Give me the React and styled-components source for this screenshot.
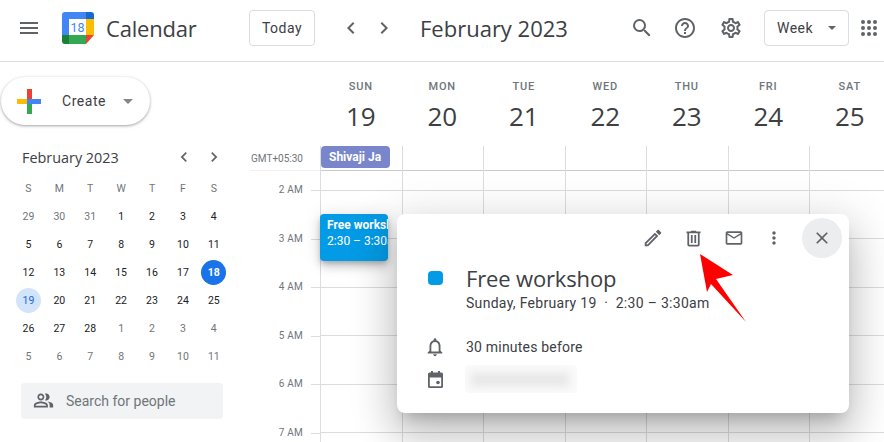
import React from 'react';
import styled, { createGlobalStyle } from 'styled-components';
import {
  MdMenu, MdSearch, MdHelpOutline, MdOutlineSettings, MdChevronLeft, MdChevronRight,
  MdOutlineEdit, MdOutlineEmail, MdMoreVert, MdClose,
  MdNotificationsNone, MdOutlinePeopleAlt,
} from 'react-icons/md';

const GlobalStyle = createGlobalStyle`
  html, body {
    margin: 0;
    padding: 0;
    background: #fff;
    overflow: hidden;
  }
  body {
    font-family: Roboto, "Liberation Sans", sans-serif;
    color: #3c4043;
  }
`;

const TITLE_FONT = `"Open Sans", Roboto, sans-serif`;
const COLUMN = 81.5;

const Page = styled.div`
  position: relative;
  width: 884px;
  height: 442px;
  overflow: hidden;
  display: flex;
  flex-direction: column;
`;

const Header = styled.header`
  flex: none;
  height: 62px;
  box-sizing: border-box;
  padding-bottom: 5px;
  border-bottom: 1px solid #dadce0;
  display: flex;
  align-items: center;
`;

const MenuButton = styled.div`
  width: 62px;
  padding-left: 17px;
  box-sizing: border-box;
  display: flex;
  color: #5f6368;
  font-size: 24px;
`;

const Brand = styled.div`
  width: 187px;
  display: flex;
  align-items: center;
  gap: 12px;
`;

const BrandName = styled.span`
  font-family: ${TITLE_FONT};
  font-size: 22px;
  color: #3c4043;
  letter-spacing: -0.2px;
`;

const OutlineButton = styled.div`
  height: 36px;
  width: ${p => p.$width}px;
  box-sizing: border-box;
  border: 1px solid #dadce0;
  border-radius: 4px;
  font-size: 14px;
  font-weight: 400;
  letter-spacing: 0.5px;
  color: #3c4043;
  display: flex;
  align-items: center;
  justify-content: center;
  gap: 15px;
`;

const NavGroup = styled.div`
  margin-left: 24px;
  width: 81px;
  display: flex;
  gap: 9px;
  color: #5f6368;
  font-size: 24px;
`;

const MonthTitle = styled.div`
  width: 210px;
  font-family: ${TITLE_FONT};
  font-size: 22px;
  color: #3c4043;
`;

const HeaderIcon = styled.div`
  width: ${p => p.$width}px;
  display: flex;
  color: #5f6368;
  font-size: 24px;
`;

const Caret = styled.span`
  width: 0;
  height: 0;
  border-left: ${p => p.$size}px solid transparent;
  border-right: ${p => p.$size}px solid transparent;
  border-top: ${p => p.$size}px solid ${p => p.$color || '#5f6368'};
`;

const AppsButton = styled.div`
  margin-left: 12px;
  display: flex;
`;

const Body = styled.div`
  flex: 1;
  display: flex;
  min-height: 0;
`;

const Sidebar = styled.aside`
  flex: none;
  width: 250px;
  display: flex;
  flex-direction: column;
`;

const CreateButton = styled.div`
  margin: 15px 0 0 1px;
  width: 149px;
  height: 48px;
  box-sizing: border-box;
  border-radius: 24px;
  background: #fff;
  box-shadow: 0 1px 2px 0 rgba(60,64,67,.3), 0 1px 3px 1px rgba(60,64,67,.15);
  display: flex;
  align-items: center;
  padding-left: 16px;
`;

const CreateLabel = styled.span`
  margin-left: 21px;
  margin-right: 17px;
  font-size: 14px;
  font-weight: 400;
  letter-spacing: 0.55px;
  color: #3c4043;
`;

const MiniCalendar = styled.section`
  margin: 22px 0 0 13px;
  width: 217px;
`;

const MiniHeader = styled.div`
  height: 20px;
  display: flex;
  align-items: center;
  padding: 0 6px 0 9px;
`;

const MiniTitle = styled.div`
  flex: 1;
  font-family: ${TITLE_FONT};
  font-size: 14.4px;
  color: #3c4043;
`;

const MiniNav = styled.div`
  display: flex;
  gap: 10px;
  font-size: 20px;
  color: #5f6368;
`;

const MiniGrid = styled.div`
  margin-top: 7px;
  display: grid;
  grid-template-columns: repeat(7, 30.9px);
  grid-auto-rows: 28.1px;
`;

const MiniCell = styled.div`
  display: flex;
  align-items: center;
  justify-content: center;
  font-size: 10.5px;
  font-weight: ${p => (p.$today ? 700 : 400)};
  color: ${p => p.$color};
`;

const MiniDot = styled.span`
  width: 25px;
  height: 25px;
  border-radius: 50%;
  display: flex;
  align-items: center;
  justify-content: center;
  background: ${p => p.$bg};
`;

const PeopleSearch = styled.div`
  margin: 12px 0 0 21px;
  width: 202px;
  height: 36px;
  border-radius: 4px;
  background: #f1f3f4;
  display: flex;
  align-items: center;
  padding-left: 12px;
  box-sizing: border-box;
  gap: 12px;
  font-size: 14px;
  color: #70757a;
`;

const PeopleIcon = styled.span`
  display: flex;
  font-size: 21px;
  color: #5f6368;
`;

const Main = styled.main`
  flex: 1;
  display: flex;
  flex-direction: column;
  min-width: 0;
`;

const DayHeaders = styled.div`
  flex: none;
  height: 84px;
  padding-left: 70px;
  display: grid;
  grid-template-columns: repeat(7, ${COLUMN}px);
`;

const DayHeader = styled.div`
  display: flex;
  flex-direction: column;
  align-items: center;
  padding-top: 18px;
`;

const DayName = styled.div`
  font-size: 11px;
  font-weight: 500;
  letter-spacing: 0.8px;
  line-height: 14px;
  color: #70757a;
`;

const DayNumber = styled.div`
  margin-top: 7px;
  font-family: ${TITLE_FONT};
  font-size: 26px;
  line-height: 30px;
  color: #3c4043;
`;

const TimeGrid = styled.div`
  flex: 1;
  display: flex;
  min-height: 0;
`;

const Gutter = styled.div`
  flex: none;
  width: 70px;
  display: flex;
  flex-direction: column;
`;

const GutterZone = styled.div`
  flex: none;
  height: 25px;
  box-sizing: border-box;
  border-bottom: 1px solid #f1f1f1;
  display: flex;
  align-items: center;
  justify-content: flex-end;
  padding-right: 17px;
  font-size: 10px;
  color: #70757a;
`;

const GutterStart = styled.div`
  flex: none;
  height: 19px;
`;

const GutterHour = styled.div`
  flex: none;
  height: 48.5px;
  display: flex;
  justify-content: flex-end;
  gap: 8px;
  font-size: 10px;
  letter-spacing: 0.2px;
  color: #70757a;
`;

const HourLabel = styled.span`
  margin-top: -6px;
`;

const HourTick = styled.span`
  width: 9px;
  height: 1px;
  background: #dadce0;
`;

const Days = styled.div`
  flex: 1;
  display: grid;
  grid-template-columns: repeat(7, ${COLUMN}px);
`;

const DayColumn = styled.div`
  position: relative;
  border-left: 1px solid #dadce0;
  box-sizing: border-box;
  display: flex;
  flex-direction: column;
`;

const AllDayCell = styled.div`
  flex: none;
  height: 25px;
  box-sizing: border-box;
  border-bottom: 1px solid #c8cacd;
`;

const StartCell = styled.div`
  flex: none;
  height: 19.5px;
  box-sizing: border-box;
  border-bottom: 1px solid #dadce0;
`;

const HourCell = styled.div`
  flex: none;
  height: 48.5px;
  box-sizing: border-box;
  border-bottom: 1px solid #dadce0;
`;

const AllDayChip = styled.div`
  width: 69px;
  height: 22px;
  box-sizing: border-box;
  border-radius: 4px;
  background: #7986cb;
  color: #fff;
  font-size: 12px;
  font-weight: 700;
  line-height: 22px;
  padding-left: 8px;
  white-space: nowrap;
  overflow: hidden;
`;

const EventChip = styled.div`
  position: absolute;
  top: 68px;
  left: -1px;
  width: 68px;
  height: 47px;
  box-sizing: border-box;
  padding: 4px 0 0 7px;
  border-radius: 4px;
  background: #039be5;
  color: #fff;
  font-size: 12px;
  line-height: 15.5px;
  white-space: nowrap;
  overflow: hidden;
  box-shadow: 0 6px 10px 0 rgba(0,0,0,.14), 0 1px 18px 0 rgba(0,0,0,.12), 0 3px 5px -1px rgba(0,0,0,.2);
`;

const EventTitle = styled.div`
  font-weight: 700;
`;

const Popup = styled.div`
  position: absolute;
  left: 397px;
  top: 214px;
  width: 452px;
  height: 199px;
  background: #fff;
  border-radius: 8px;
  box-shadow: 0 24px 38px 3px rgba(0,0,0,.14), 0 9px 46px 8px rgba(0,0,0,.12), 0 11px 15px -7px rgba(0,0,0,.2);
  display: flex;
  flex-direction: column;
`;

const PopupToolbar = styled.div`
  height: 48px;
  box-sizing: border-box;
  display: flex;
  align-items: center;
  justify-content: flex-end;
  padding-right: 7px;
  color: #5f6368;
`;

const ToolIcon = styled.span`
  width: ${p => p.$width || 40}px;
  display: flex;
  justify-content: center;
  font-size: ${p => p.$size || 20}px;
`;

const CloseButton = styled.span`
  margin-left: 8px;
  width: 40px;
  height: 40px;
  border-radius: 50%;
  background: #ecedee;
  display: flex;
  align-items: center;
  justify-content: center;
  font-size: 20px;
`;

const PopupRow = styled.div`
  display: flex;
  align-items: ${p => p.$align || 'center'};
  height: ${p => p.$height}px;
  margin-top: ${p => p.$top || 0}px;
`;

const RowIcon = styled.div`
  flex: none;
  width: 69px;
  padding-left: 27px;
  box-sizing: border-box;
  display: flex;
  font-size: 22px;
  color: #5f6368;
`;

const ColorSwatch = styled.span`
  margin: 8px 0 0 4px;
  width: 15px;
  height: 14px;
  border-radius: 4px;
  background: #039be5;
`;

const EventName = styled.div`
  font-family: ${TITLE_FONT};
  font-size: 22px;
  letter-spacing: -0.15px;
  line-height: 30px;
  color: #3c4043;
`;

const EventWhen = styled.div`
  font-size: 14px;
  line-height: 20px;
  color: #3c4043;
  letter-spacing: 0.3px;
  white-space: pre;
`;

const RowText = styled.div`
  font-size: 14px;
  letter-spacing: 0.2px;
  color: #3c4043;
`;

const BlurredName = styled.div`
  position: relative;
  width: 112px;
  height: 28px;
  margin-left: -1px;
  border-radius: 4px;
  background: #fafafa;
  overflow: hidden;
  &::after {
    content: '';
    position: absolute;
    left: 6px;
    right: 8px;
    top: 8px;
    bottom: 7px;
    background: #e6e6e6;
    filter: blur(4px);
  }
`;

const CalendarGlyph = styled.svg`
  margin-left: 4px;
`;

const ArrowOverlay = styled.svg`
  position: absolute;
  left: 690px;
  top: 245px;
`;

const LogoIcon = () => (
  <svg width="32" height="32" viewBox="0 0 32 32">
    <path d="M3 0h21v7H7v16H0V3a3 3 0 0 1 3-3z" fill="#4285f4" />
    <path d="M24 0h5a3 3 0 0 1 3 3v4h-8z" fill="#1967d2" />
    <rect x="24" y="7" width="8" height="16" fill="#fbbc04" />
    <rect x="7" y="23" width="17" height="9" fill="#34a853" />
    <path d="M0 23h7v9H3a3 3 0 0 1-3-3z" fill="#188038" />
    <path d="M24 23h8l-8 9z" fill="#ea4335" />
    <text x="15.5" y="19.5" textAnchor="middle" fontFamily="Roboto, sans-serif" fontSize="12.5" fill="#4285f4">18</text>
  </svg>
);

const PlusIcon = () => (
  <svg width="24" height="25" viewBox="0 0 24 25">
    <rect x="0" y="10" width="10" height="5" fill="#fbbc04" />
    <rect x="10" y="0" width="5" height="10" fill="#ea4335" />
    <rect x="14" y="10" width="10" height="5" fill="#4285f4" />
    <rect x="10" y="15" width="5" height="10" fill="#34a853" />
    <rect x="10" y="10" width="5" height="5" fill="#4285f4" />
  </svg>
);

const AppsIcon = () => (
  <svg width="16" height="16" viewBox="0 0 16 16" fill="#5f6368">
    {[2, 8, 14].map(y => [2, 8, 14].map(x => <circle key={`${x}-${y}`} cx={x} cy={y} r="2" />))}
  </svg>
);

const TrashIcon = () => (
  <svg width="21" height="21" viewBox="0 0 24 24" fill="currentColor">
    <path d="M9 3v1H4v2h1v13a2 2 0 0 0 2 2h10a2 2 0 0 0 2-2V6h1V4h-5V3H9zM7 6h10v13H7V6zm2 2v9h2V8H9zm4 0v9h2V8h-2z" />
  </svg>
);

const CalendarIcon = () => (
  <CalendarGlyph width="15" height="17" viewBox="0 0 15 17" fill="#5f6368">
    <path d="M3 0h2v1.5h5V0h2v1.5h1.5A1.5 1.5 0 0 1 15 3v12.5a1.5 1.5 0 0 1-1.5 1.5h-12A1.5 1.5 0 0 1 0 15.5V3a1.5 1.5 0 0 1 1.5-1.5H3zM1.8 6.5v8.7h11.4V6.5z" />
    <circle cx="10" cy="11.5" r="1.8" />
  </CalendarGlyph>
);

const week = ['SUN', 'MON', 'TUE', 'WED', 'THU', 'FRI', 'SAT'];
const dates = [19, 20, 21, 22, 23, 24, 25];
const hours = ['2 AM', '3 AM', '4 AM', '5 AM', '6 AM', '7 AM'];
const miniLetters = ['S', 'M', 'T', 'W', 'T', 'F', 'S'];
const miniDays = [
  29, 30, 31, 1, 2, 3, 4,
  5, 6, 7, 8, 9, 10, 11,
  12, 13, 14, 15, 16, 17, 18,
  19, 20, 21, 22, 23, 24, 25,
  26, 27, 28, 1, 2, 3, 4,
  5, 6, 7, 8, 9, 10, 11,
];

const miniColor = index => {
  if (index === 20) return '#fff';
  if (index === 21) return '#1967d2';
  if (index < 3 || index >= 31) return '#70757a';
  return '#202124';
};

export default function App() {
  return (
    <Page>
      <GlobalStyle />
      <Header>
        <MenuButton><MdMenu /></MenuButton>
        <Brand>
          <LogoIcon />
          <BrandName>Calendar</BrandName>
        </Brand>
        <OutlineButton $width={66}>Today</OutlineButton>
        <NavGroup>
          <MdChevronLeft />
          <MdChevronRight />
        </NavGroup>
        <MonthTitle>February 2023</MonthTitle>
        <HeaderIcon $width={43}><MdSearch /></HeaderIcon>
        <HeaderIcon $width={46}><MdHelpOutline /></HeaderIcon>
        <HeaderIcon $width={45}><MdOutlineSettings /></HeaderIcon>
        <OutlineButton $width={85}>Week <Caret $size={4} /></OutlineButton>
        <AppsButton><AppsIcon /></AppsButton>
      </Header>
      <Body>
        <Sidebar>
          <CreateButton>
            <PlusIcon />
            <CreateLabel>Create</CreateLabel>
            <Caret $size={5} $color="#80868b" />
          </CreateButton>
          <MiniCalendar>
            <MiniHeader>
              <MiniTitle>February 2023</MiniTitle>
              <MiniNav>
                <MdChevronLeft />
                <MdChevronRight />
              </MiniNav>
            </MiniHeader>
            <MiniGrid>
              {miniLetters.map((l, i) => (
                <MiniCell key={i} $color="#70757a">{l}</MiniCell>
              ))}
              {miniDays.map((d, i) => (
                <MiniCell key={i} $color={miniColor(i)} $today={i === 20}>
                  {i === 20 ? <MiniDot $bg="#1a73e8">{d}</MiniDot> : i === 21 ? <MiniDot $bg="#d2e3fc">{d}</MiniDot> : d}
                </MiniCell>
              ))}
            </MiniGrid>
          </MiniCalendar>
          <PeopleSearch>
            <PeopleIcon><MdOutlinePeopleAlt /></PeopleIcon>
            Search for people
          </PeopleSearch>
        </Sidebar>
        <Main>
          <DayHeaders>
            {week.map((name, i) => (
              <DayHeader key={name}>
                <DayName>{name}</DayName>
                <DayNumber>{dates[i]}</DayNumber>
              </DayHeader>
            ))}
          </DayHeaders>
          <TimeGrid>
            <Gutter>
              <GutterZone>GMT+05:30</GutterZone>
              <GutterStart />
              {hours.map(h => (
                <GutterHour key={h}>
                  <HourLabel>{h}</HourLabel>
                  <HourTick />
                </GutterHour>
              ))}
            </Gutter>
            <Days>
              {week.map((name, i) => (
                <DayColumn key={name}>
                  <AllDayCell>{i === 0 && <AllDayChip>Shivaji Ja</AllDayChip>}</AllDayCell>
                  <StartCell />
                  {hours.map(h => <HourCell key={h} />)}
                  {i === 0 && (
                    <EventChip>
                      <EventTitle>Free workshop</EventTitle>
                      2:30 – 3:30am
                    </EventChip>
                  )}
                </DayColumn>
              ))}
            </Days>
          </TimeGrid>
        </Main>
      </Body>
      <Popup>
        <PopupToolbar>
          <ToolIcon $size={22}><MdOutlineEdit /></ToolIcon>
          <ToolIcon $width={41}><TrashIcon /></ToolIcon>
          <ToolIcon><MdOutlineEmail /></ToolIcon>
          <ToolIcon><MdMoreVert /></ToolIcon>
          <CloseButton><MdClose /></CloseButton>
        </PopupToolbar>
        <PopupRow $height={56} $top={1} $align="flex-start">
          <RowIcon><ColorSwatch /></RowIcon>
          <div>
            <EventName>Free workshop</EventName>
            <EventWhen>Sunday, February 19  ·  2:30 – 3:30am</EventWhen>
          </div>
        </PopupRow>
        <PopupRow $height={30} $top={13}>
          <RowIcon><MdNotificationsNone /></RowIcon>
          <RowText>30 minutes before</RowText>
        </PopupRow>
        <PopupRow $height={30} $top={2}>
          <RowIcon><CalendarIcon /></RowIcon>
          <BlurredName />
        </PopupRow>
      </Popup>
      <ArrowOverlay width="70" height="90" viewBox="690 245 70 90">
        <path d="M700 254 L733 275 L716 279 L746 322 L711 284 L707 292 Z" fill="#ff0000" />
      </ArrowOverlay>
    </Page>
  );
}
